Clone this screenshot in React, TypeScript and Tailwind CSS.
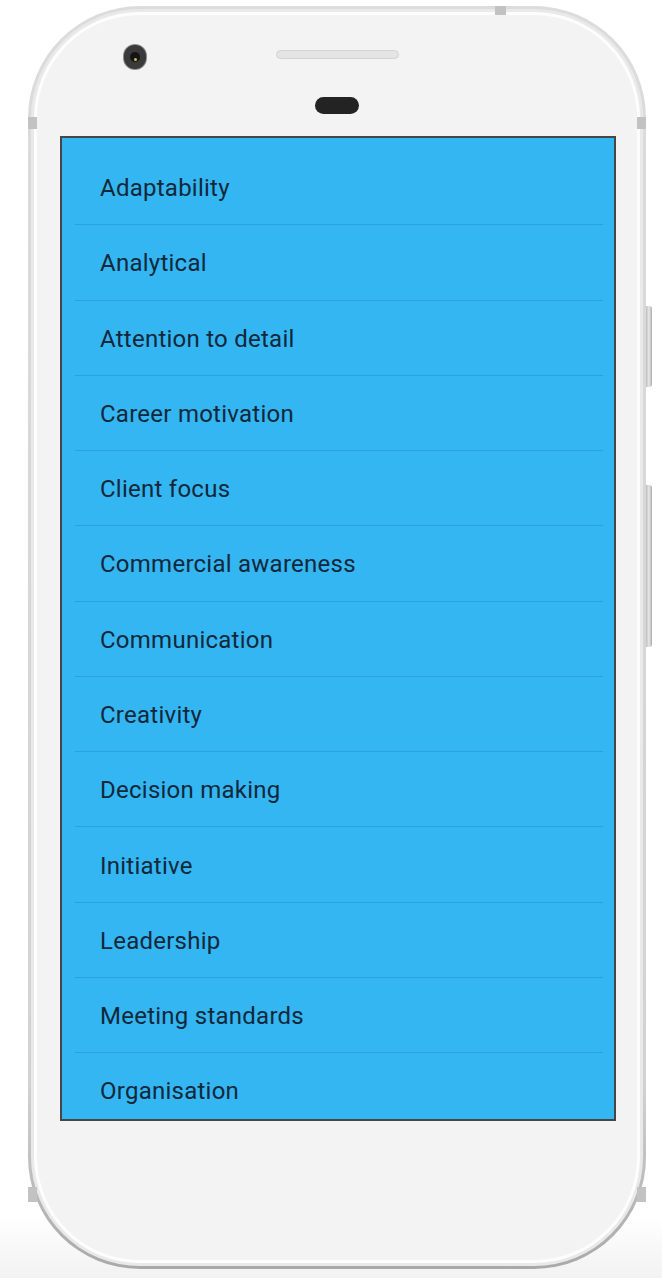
const skills = [
  "Adaptability",
  "Analytical",
  "Attention to detail",
  "Career motivation",
  "Client focus",
  "Commercial awareness",
  "Communication",
  "Creativity",
  "Decision making",
  "Initiative",
  "Leadership",
  "Meeting standards",
  "Organisation",
];

const SkillRow = ({ name }: { name: string }) => {
  return (
    <div className="h-[75.27px] shrink-0 flex items-center pl-[25px] pt-[2px] border-b border-[#2ba3da]">
      <span className="text-[24px] leading-none tracking-[0.25px] text-[#12283a]">{name}</span>
    </div>
  );
};

const App = () => {
  return (
    <div
      className="w-[662px] h-[1278px] relative overflow-hidden bg-[linear-gradient(to_bottom,#ffffff_95%,#f2f2f2)] pt-[6px] pl-[28px]"
      style={{ fontFamily: "Roboto, 'Noto Sans', sans-serif" }}
    >
      {/* side buttons */}
      <div className="absolute left-[646px] top-[306px] w-[6px] h-[81px] rounded-r-[3px] bg-[linear-gradient(to_right,#bdbdbd,#e9e9e9,#a9a9a9)]" />
      <div className="absolute left-[646px] top-[485px] w-[6px] h-[162px] rounded-r-[3px] bg-[linear-gradient(to_right,#bdbdbd,#e9e9e9,#a9a9a9)]" />

      {/* phone body */}
      <div className="relative w-[618px] h-[1263px] rounded-[112px] bg-[linear-gradient(to_bottom,#dcdcdc,#d2d2d2_85%,#a9a9a9)] p-[3px]">
        <div className="w-full h-full rounded-[109px] bg-[#e9e9e9] p-[3px]">
          <div className="w-full h-full rounded-[106px] bg-[#fdfdfd] p-[3px]">
            <div className="w-full h-full rounded-[103px] bg-[#f3f3f3] flex flex-col">
              {/* top bezel */}
              <div className="h-[121px] shrink-0 grid grid-cols-[1fr_auto_1fr] items-start">
                <div className="pt-[30px] pl-[87px]">
                  <div className="w-[22px] h-[24px] rounded-full bg-[#3a3a3a] flex items-center justify-center shadow-[0_0_0_1px_#8a8a8a]">
                    <div className="w-[10px] h-[10px] rounded-full bg-[#141414] flex items-end justify-center pb-[1px]">
                      <div className="w-[3px] h-[3px] rounded-full bg-[#c7bd52]" />
                    </div>
                  </div>
                </div>
                <div className="pt-[35px] flex flex-col items-center">
                  <div className="w-[123px] h-[9px] rounded-full bg-[#e4e4e4] border border-[#d3d3d3]" />
                  <div className="mt-[38px] w-[44px] h-[17px] rounded-full bg-[#232323]" />
                </div>
                <div />
              </div>

              {/* screen */}
              <div className="ml-[23px] mr-[21px] h-[985px] shrink-0 border-2 border-[#464646] bg-[#33b6f2] overflow-hidden">
                <div className="pt-[12px] pl-[13px] pr-[11px] flex flex-col">
                  {skills.map((s) => (
                    <SkillRow key={s} name={s} />
                  ))}
                </div>
              </div>
            </div>
          </div>
        </div>

        {/* antenna bands */}
        <div className="absolute left-[467px] top-0 w-[11px] h-[9px] bg-[#c2c2c2]" />
        <div className="absolute left-0 top-[111px] w-[9px] h-[12px] bg-[#c2c2c2]" />
        <div className="absolute right-0 top-[111px] w-[9px] h-[12px] bg-[#c2c2c2]" />
        <div className="absolute left-0 top-[1181px] w-[9px] h-[15px] bg-[#c2c2c2]" />
        <div className="absolute right-0 top-[1181px] w-[9px] h-[15px] bg-[#c2c2c2]" />
      </div>
    </div>
  );
};

export default App;
